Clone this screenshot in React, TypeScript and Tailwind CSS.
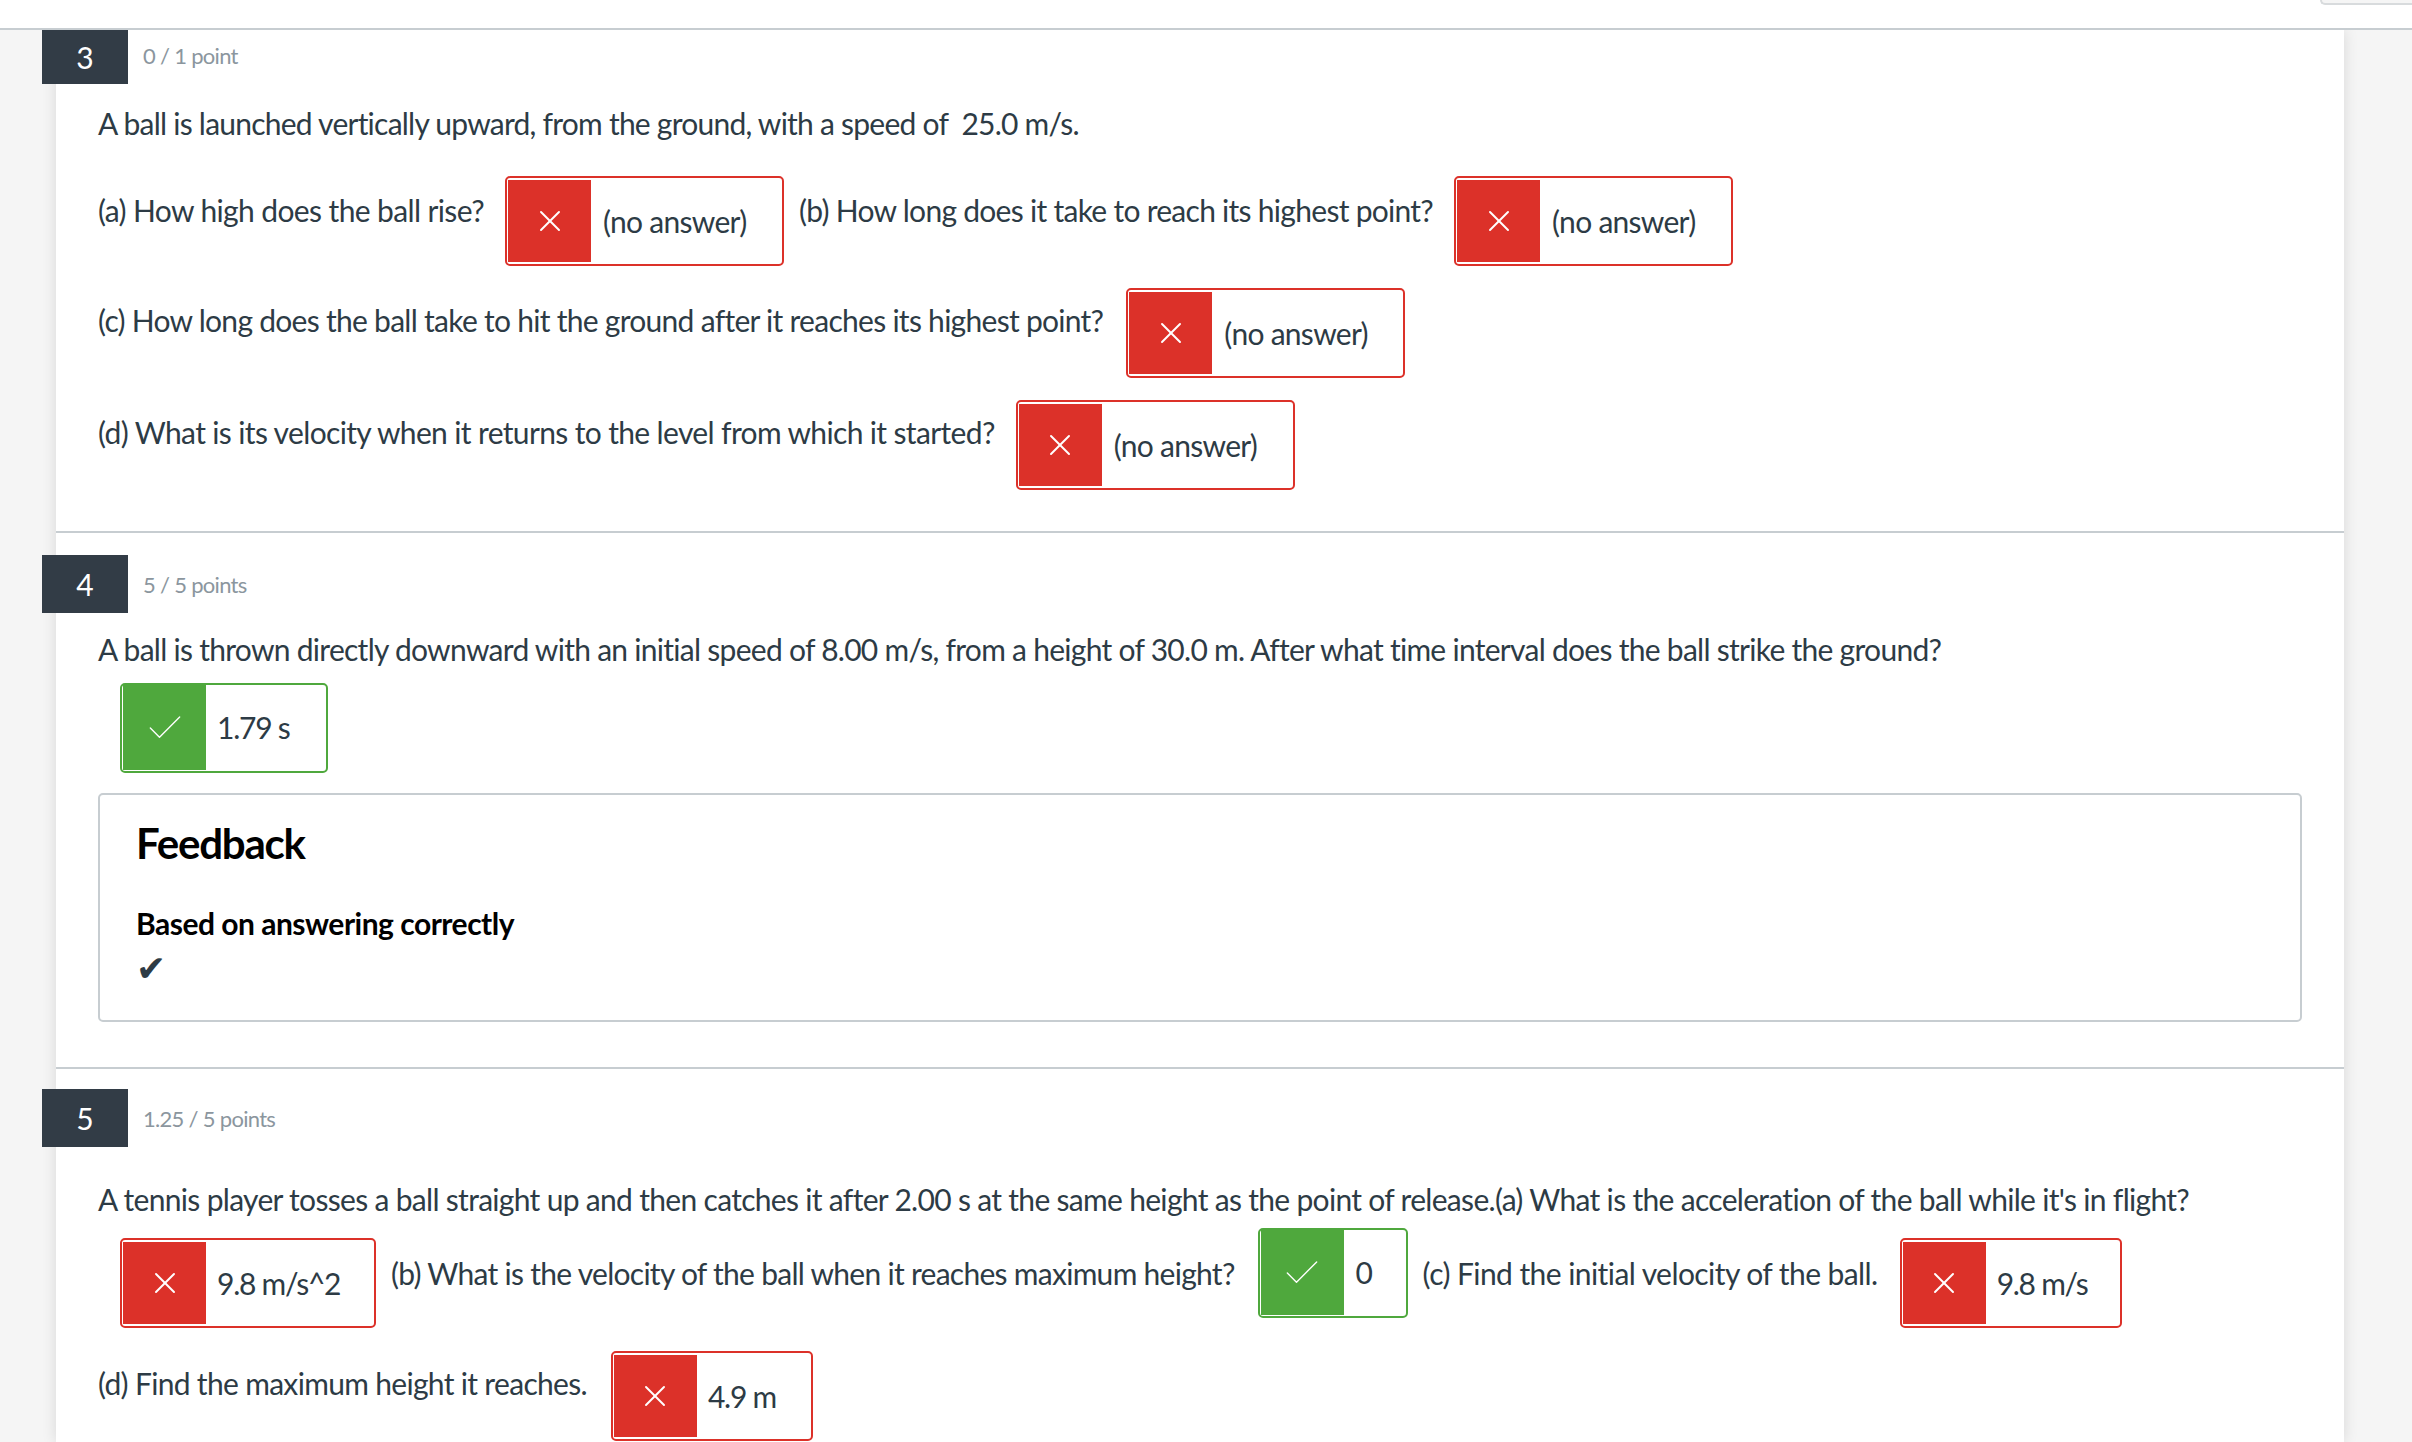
import { Check, X } from "lucide-react";

function Answer({ value, correct, className, numeric }: { value: string; correct?: boolean; className?: string; numeric?: boolean }) {
  return (
    <div
      className={`flex h-[90px] shrink-0 rounded-[5px] border-2 bg-white ${
        correct ? "border-[#4fa83d]" : "border-[#dc3129]"
      } ${className ?? ""}`}
    >
      {correct ? (
        <div className="ml-[1px] flex h-[85px] w-[83px] items-center justify-center bg-[#4fa83d]">
          <Check size={44} strokeWidth={0.75} className="text-white" />
        </div>
      ) : (
        <div className="ml-[1px] mt-[2px] flex h-[82px] w-[83px] items-center justify-center bg-[#dc3129]">
          <X size={36} strokeWidth={1.3} className="text-white" />
        </div>
      )}
      <div className={`leading-[40px] ${correct ? "pt-[22px]" : "pt-[23px]"} ${numeric ? "pl-[11px] tracking-[-1.25px]" : "pl-[12px]"}`}>{value}</div>
    </div>
  );
}

function Label({ children, className }: { children: string; className?: string }) {
  return <div className={`whitespace-nowrap leading-[42px] ${className ?? ""}`}>{children}</div>;
}

function Badge({ num, points, height, pointsClass }: { num: number; points: string; height: string; pointsClass?: string }) {
  return (
    <div className="-ml-[14px] flex items-center">
      <div className={`flex w-[86px] items-center justify-center bg-[#323c46] text-[30px] tracking-normal text-white ${height}`}>{num}</div>
      <div className={`ml-[15px] text-[22px] tracking-[-0.7px] text-[#8b969e] ${pointsClass ?? ""}`}>{points}</div>
    </div>
  );
}

export default function App() {
  return (
    <div className="flex h-[1442px] flex-col overflow-hidden bg-[#f5f5f5] font-['Lato',sans-serif] text-[30px] tracking-[-0.72px] text-[#2d3b45]">
      <div className="relative z-10 h-[30px] shrink-0 border-b-2 border-[#c7cdd1] bg-white">
        <div className="absolute right-0 top-0 h-[5px] w-[92px] rounded-bl-[6px] border-b-2 border-l-2 border-[#d8dbdd] bg-[#f5f5f5]" />
      </div>

      <main className="ml-[56px] w-[2288px] flex-1 bg-white shadow-[0_0_14px_rgba(0,0,0,0.12)]">
        {/* question 3 */}
        <section className="h-[503px] border-b-2 border-[#c7cdd1]">
          <Badge num={3} points="0 / 1 point" height="h-[54px]" pointsClass="mb-[4px]" />
          <div className="pl-[42px]">
            <p className="mt-[18px] leading-[42px] tracking-[-0.76px]">A ball is launched vertically upward, from the ground, with a speed of&nbsp; 25.0 m/s.</p>
            <div className="mt-[32px] flex items-start">
              <Label className="mr-[21px] pt-[13px] tracking-[-0.62px]">(a) How high does the ball rise?</Label>
              <Answer value="(no answer)" className="w-[279px]" />
              <Label className="ml-[15px] mr-[21px] pt-[13px]">(b) How long does it take to reach its highest point?</Label>
              <Answer value="(no answer)" className="w-[279px]" />
            </div>
            <div className="mt-[22px] flex items-start">
              <Label className="mr-[23px] pt-[11px]">(c) How long does the ball take to hit the ground after it reaches its highest point?</Label>
              <Answer value="(no answer)" className="w-[279px]" />
            </div>
            <div className="mt-[22px] flex items-start">
              <Label className="mr-[21px] pt-[11px] tracking-[-0.64px]">(d) What is its velocity when it returns to the level from which it started?</Label>
              <Answer value="(no answer)" className="w-[279px]" />
            </div>
          </div>
        </section>

        {/* question 4 */}
        <section className="h-[536px] border-b-2 border-[#c7cdd1] pt-[22px]">
          <Badge num={4} points="5 / 5 points" height="h-[58px]" />
          <div className="pl-[42px] pr-[42px]">
            <p className="mt-[15px] leading-[42px]">A ball is thrown directly downward with an initial speed of 8.00 m/s, from a height of 30.0 m. After what time interval does the ball strike the ground?</p>
            <div className="ml-[22px] mt-[13px] flex">
              <Answer correct numeric value="1.79 s" className="w-[208px]" />
            </div>
            <div className="mt-[20px] h-[229px] rounded-[5px] border-2 border-[#c7cdd1] px-[36px]">
              <h3 className="mt-[23px] text-[42px] font-bold leading-[50px] tracking-[-1.2px] text-black">Feedback</h3>
              <p className="mt-[34px] font-bold leading-[42px] tracking-[-0.5px] text-black">Based on answering correctly</p>
              <div className="mt-[3px] text-[36px] leading-[40px]">✔</div>
            </div>
          </div>
        </section>

        {/* question 5 */}
        <section className="pt-[20px]">
          <Badge num={5} points="1.25 / 5 points" height="h-[58px]" />
          <div className="pl-[42px] pr-[42px]">
            <p className="mt-[31px] whitespace-nowrap leading-[42px] tracking-[-0.69px]">A tennis player tosses a ball straight up and then catches it after 2.00 s at the same height as the point of release.(a) What is the acceleration of the ball while it's in flight?</p>
            <div className="ml-[22px] mt-[8px] flex items-start">
              <Answer numeric value="9.8 m/s^2" className="mt-[10px] w-[256px]" />
              <Label className="ml-[15px] mr-[23px] pt-[24px]">(b) What is the velocity of the ball when it reaches maximum height?</Label>
              <Answer correct value="0" className="w-[150px]" />
              <Label className="ml-[15px] mr-[22px] pt-[24px] tracking-[-0.57px]">(c) Find the initial velocity of the ball.</Label>
              <Answer numeric value="9.8 m/s" className="mt-[10px] w-[222px]" />
            </div>
            <div className="mt-[23px] flex items-start">
              <Label className="mr-[24px] pt-[11px] tracking-[-0.68px]">(d) Find the maximum height it reaches.</Label>
              <Answer numeric value="4.9 m" className="w-[202px]" />
            </div>
          </div>
        </section>
      </main>
    </div>
  );
}
